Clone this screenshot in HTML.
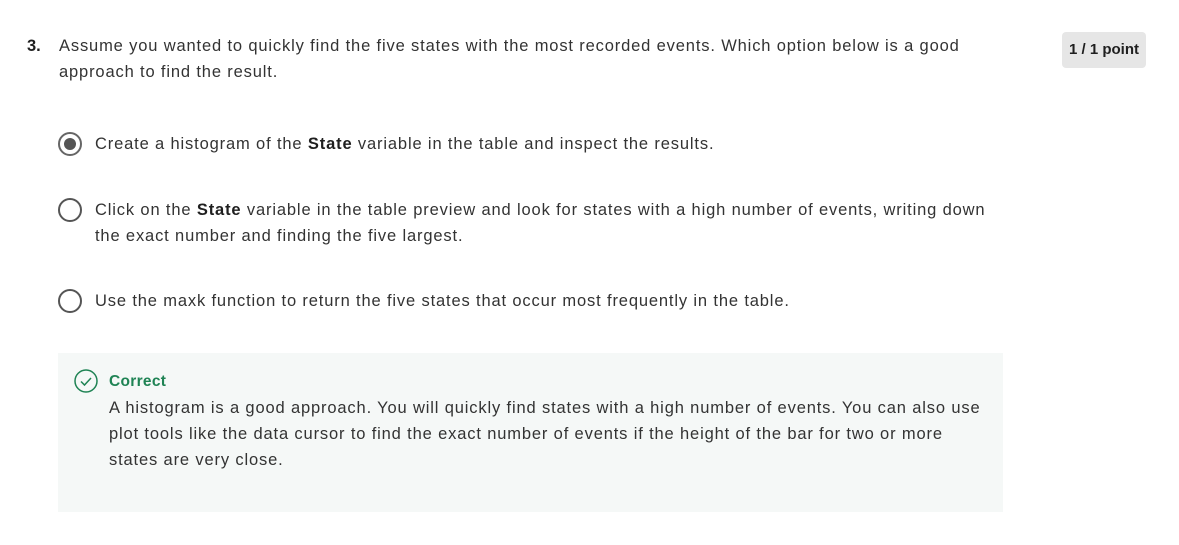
<!DOCTYPE html>
<html><head><meta charset="utf-8"><style>
body{margin:0;width:1179px;height:545px;background:#fff;font-family:"Liberation Sans",sans-serif;color:#333;position:relative;overflow:hidden}
.a{position:absolute;font-size:16.5px;line-height:26px;white-space:nowrap;letter-spacing:0.85px}
.num{left:27px;top:33px;font-weight:bold;color:#1f1f1f;letter-spacing:0}
.q{left:59px;top:33px}
.r{position:absolute;border:2px solid #555;border-radius:50%;box-sizing:border-box;left:58px;width:24px;height:24px}
.r.s::after{content:"";position:absolute;left:4px;top:4px;width:12px;height:12px;border-radius:50%;background:#555}
.r.s{border-color:#666}
.o{left:95px}
b{color:#1f1f1f}
.badge{position:absolute;left:1062px;top:32px;width:84px;height:36px;background:#e6e6e6;border-radius:4px;font-size:15px;font-weight:bold;color:#1f1f1f;text-align:center;line-height:36px}
.box{position:absolute;left:58px;top:353px;width:945px;height:159px;background:#f5f8f7}
.chk{position:absolute;left:74px;top:369px}
.cor{left:109px;top:369px;color:#1f8354;font-weight:bold;font-size:15.5px;letter-spacing:0.3px}
.exp{left:109px;top:395px}
</style></head><body>
<div class="a num">3.</div>
<div class="a q">Assume you wanted to quickly find the five states with the most recorded events. Which option below is a good<br>approach to find the result.</div>
<div class="badge">1 / 1 point</div>
<div class="r s" style="top:132px"></div>
<div class="a o" style="top:131px">Create a histogram of the <b>State</b> variable in the table and inspect the results.</div>
<div class="r" style="top:198px"></div>
<div class="a o" style="top:197px">Click on the <b>State</b> variable in the table preview and look for states with a high number of events, writing down<br>the exact number and finding the five largest.</div>
<div class="r" style="top:289px"></div>
<div class="a o" style="top:288px">Use the maxk function to return the five states that occur most frequently in the table.</div>
<div class="box"></div>
<svg class="chk" width="24" height="24" viewBox="0 0 24 24"><circle cx="12" cy="12" r="11" fill="none" stroke="#1f8354" stroke-width="1.5"/><path d="M7 12.5l3.5 3.5 6.5-7" fill="none" stroke="#1f8354" stroke-width="1.5"/></svg>
<div class="a cor">Correct</div>
<div class="a exp">A histogram is a good approach. You will quickly find states with a high number of events. You can also use<br>plot tools like the data cursor to find the exact number of events if the height of the bar for two or more<br>states are very close.</div>
</body></html>
